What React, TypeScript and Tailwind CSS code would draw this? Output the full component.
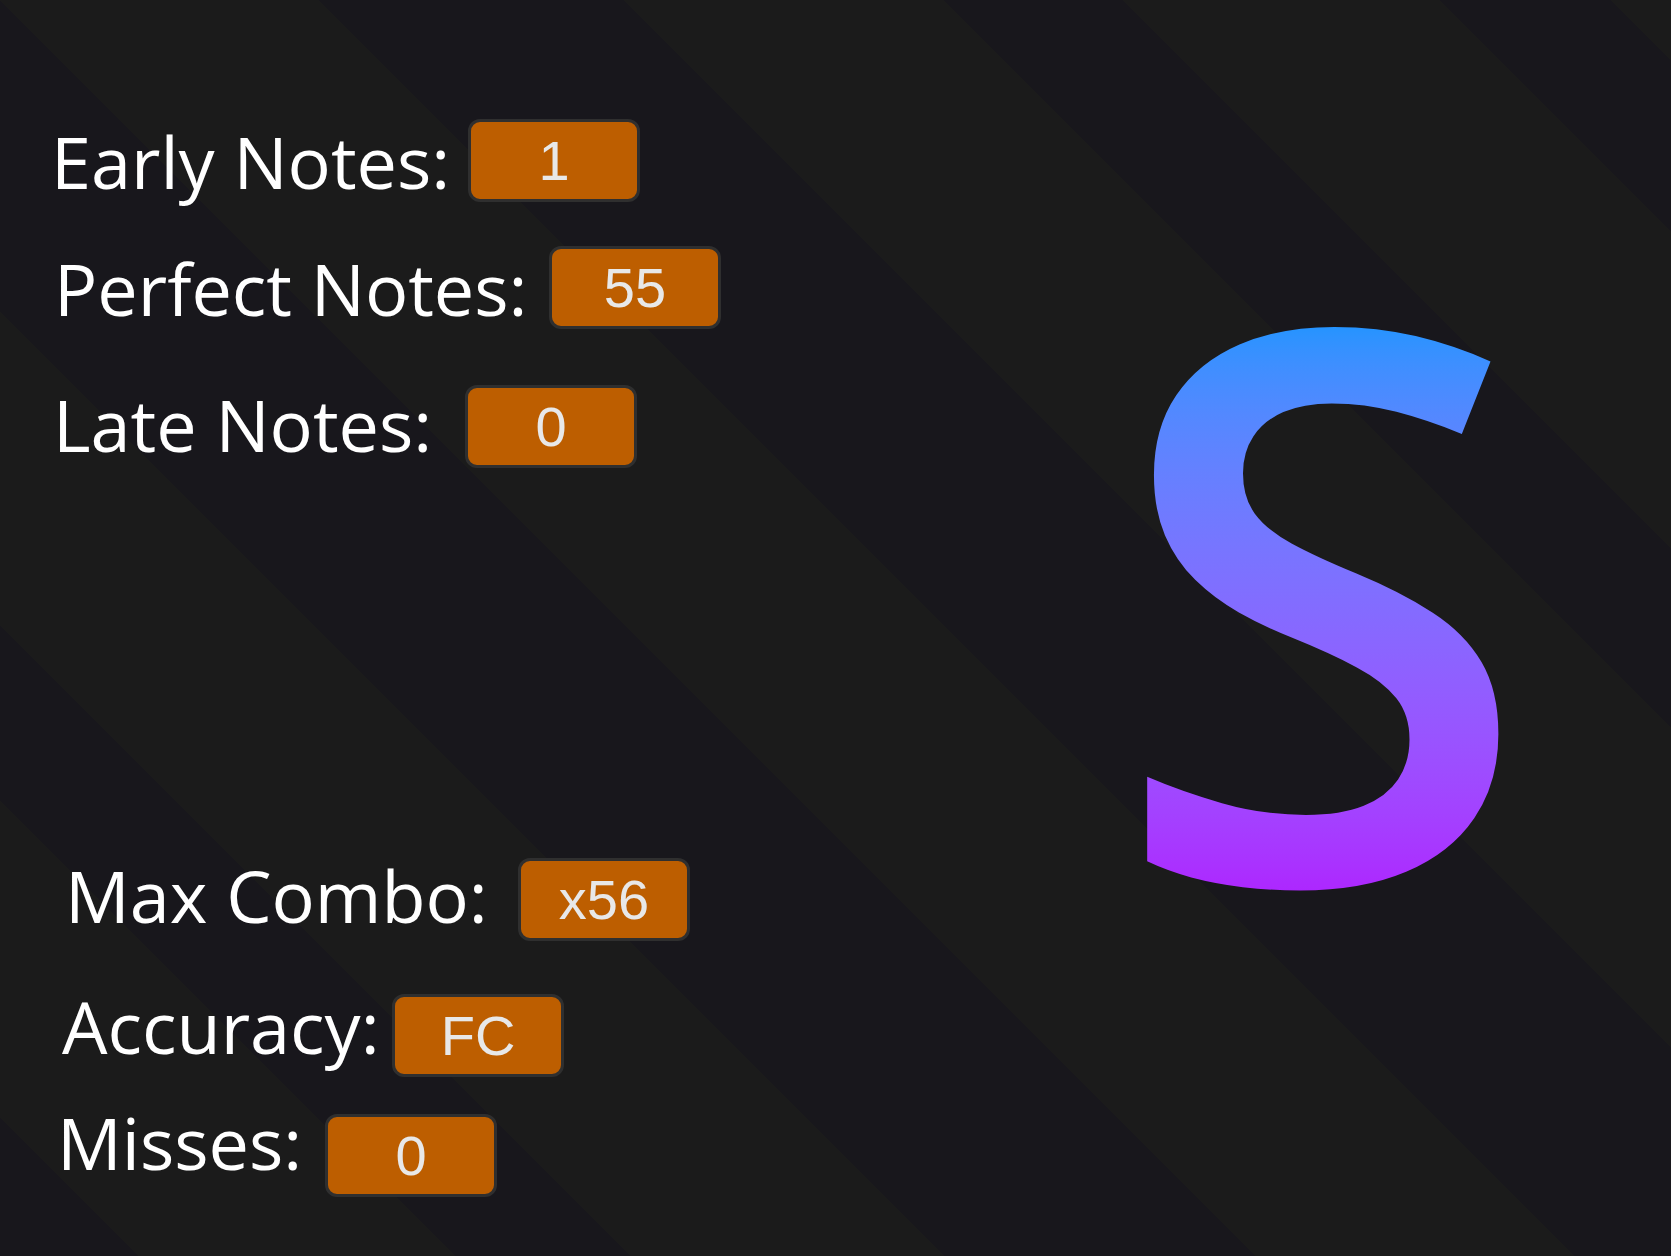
import React from 'react';

type Stat = {
  label: string;
  value: string;
  rowClass: string;
  labelClass: string;
};

const stats: Stat[] = [
  { label: 'Early Notes:', value: '1', rowClass: 'mt-[119px] pl-[51px]', labelClass: 'w-[417px]' },
  { label: 'Perfect Notes:', value: '55', rowClass: 'mt-[44px] pl-[54px]', labelClass: 'w-[495px]' },
  { label: 'Late Notes:', value: '0', rowClass: 'mt-[56px] pl-[53px]', labelClass: 'w-[412px] mb-[6px]' },
  { label: 'Max Combo:', value: 'x56', rowClass: 'mt-[390px] pl-[65px]', labelClass: 'w-[453px] mb-[10px]' },
  { label: 'Accuracy:', value: 'FC', rowClass: 'mt-[53px] pl-[62px]', labelClass: 'w-[330px] mb-[20px]' },
  { label: 'Misses:', value: '0', rowClass: 'mt-[37px] pl-[57px]', labelClass: 'w-[268px] mb-[28px]' },
];

function StatRow({ stat }: { stat: Stat }) {
  return (
    <div className={`flex h-[83px] items-center ${stat.rowClass}`}>
      <div
        className={`shrink-0 whitespace-nowrap text-white text-[72px] leading-none font-['Open_Sans',sans-serif] ${stat.labelClass}`}
      >
        {stat.label}
      </div>
      <div className="flex h-[83px] w-[172px] shrink-0 items-center justify-center rounded-[12px] border-[3px] border-[#2f2f2f] bg-[#bd5e00]">
        <span className="text-[56px] leading-none text-[#e8e8e8] font-['Liberation_Sans',Arial,sans-serif]">
          {stat.value}
        </span>
      </div>
    </div>
  );
}

export default function App() {
  return (
    <div className="flex h-screen w-full overflow-hidden bg-[linear-gradient(45deg,#18171c_98px,#1b1b1b_98px,#1b1b1b_322px,#18171c_322px,#18171c_446px,#1b1b1b_446px,#1b1b1b_668px,#18171c_668px,#18171c_888px,#1b1b1b_888px,#1b1b1b_1113px,#18171c_1113px,#18171c_1329px,#1b1b1b_1329px,#1b1b1b_1555px,#18171c_1555px,#18171c_1682px,#1b1b1b_1682px,#1b1b1b_1906px,#18171c_1906px,#18171c_2027px,#1b1b1b_2027px)]">
      {/* Stats column */}
      <div className="flex w-[971px] shrink-0 flex-col">
        {stats.map((s) => (
          <StatRow key={s.label} stat={s} />
        ))}
      </div>

      {/* Rank letter */}
      <div className="flex flex-1 items-center justify-center">
        <div className="mb-[86px] bg-gradient-to-b from-[#2294ff] from-[16%] to-[#ad26ff] to-[90%] bg-clip-text text-[768px] font-semibold leading-none text-transparent font-['Open_Sans',sans-serif]">
          S
        </div>
      </div>
    </div>
  );
}
